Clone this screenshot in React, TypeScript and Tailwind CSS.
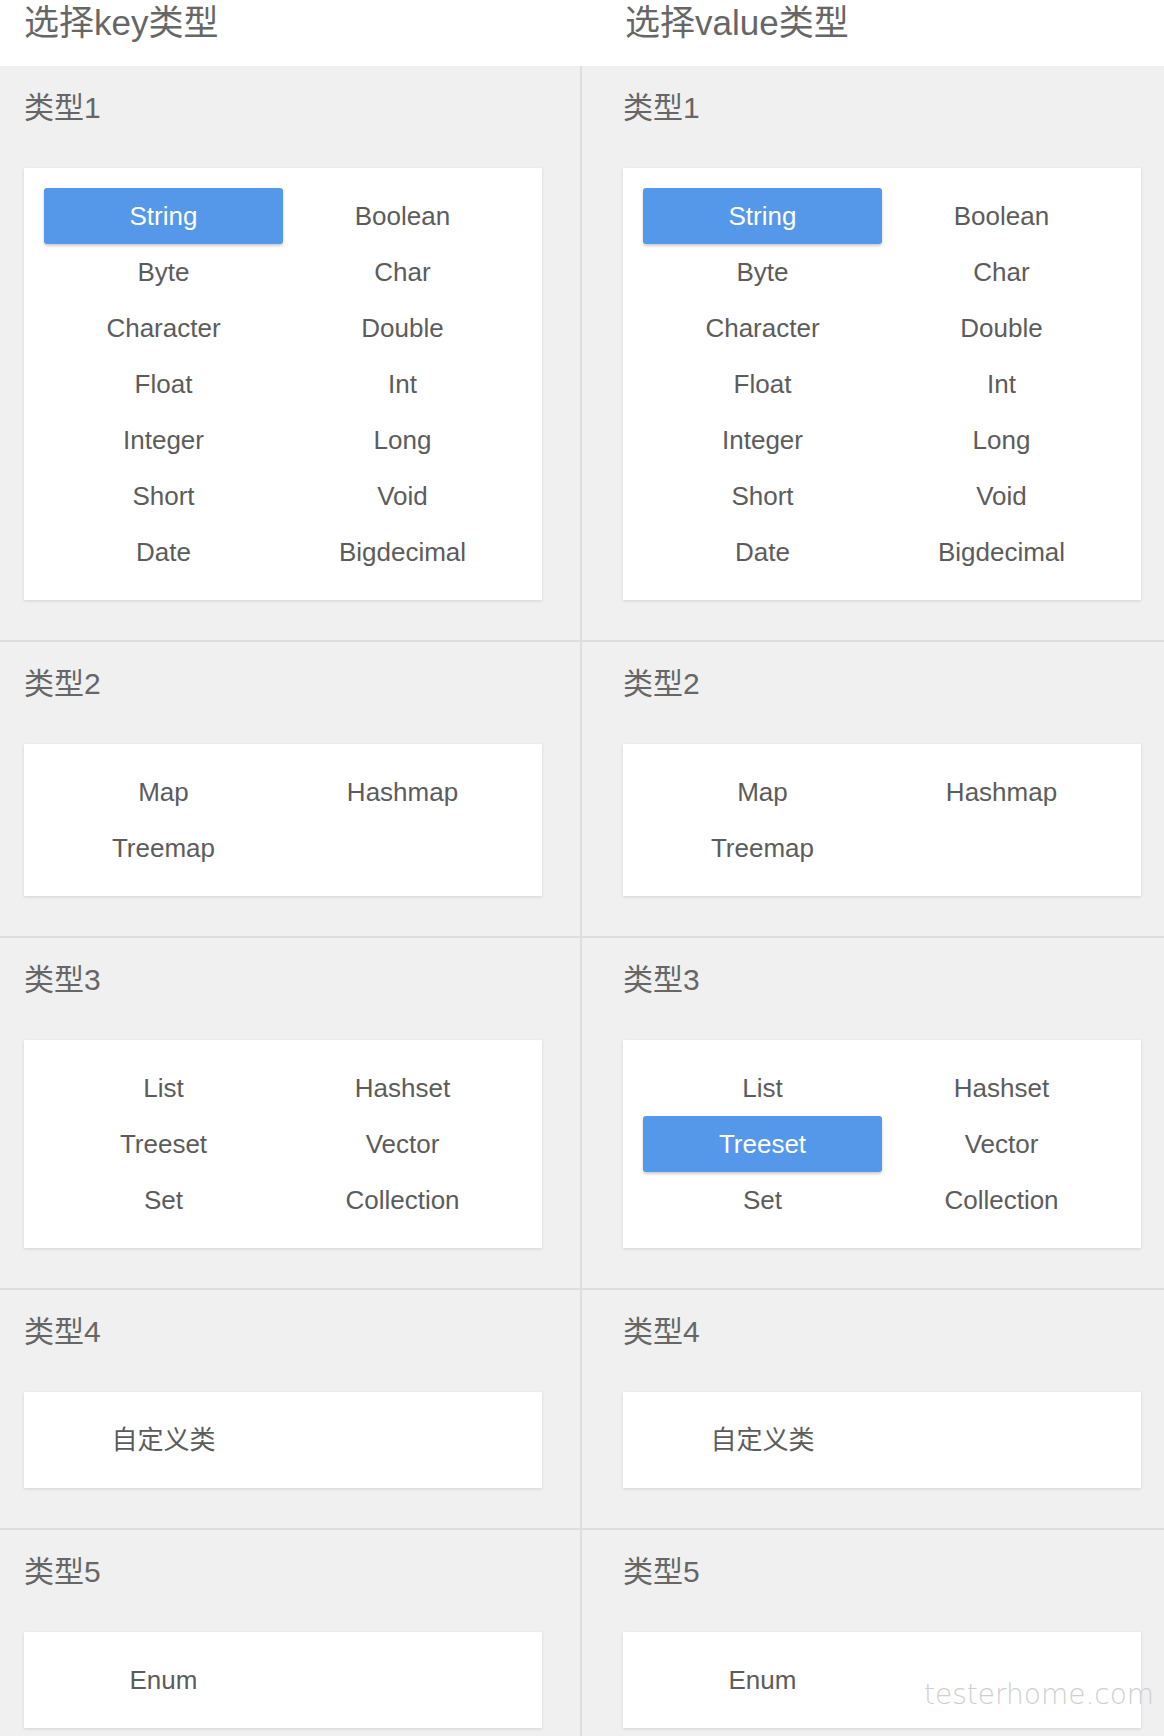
import React from "react";

type Group = { title: string; items: string[] };

const groups: Group[] = [
  {
    title: "类型1",
    items: ["String", "Boolean", "Byte", "Char", "Character", "Double", "Float", "Int", "Integer", "Long", "Short", "Void", "Date", "Bigdecimal"],
  },
  { title: "类型2", items: ["Map", "Hashmap", "Treemap"] },
  { title: "类型3", items: ["List", "Hashset", "Treeset", "Vector", "Set", "Collection"] },
  { title: "类型4", items: ["自定义类"] },
  { title: "类型5", items: ["Enum"] },
];

function Card({ items, selected }: { items: string[]; selected: string[] }) {
  return (
    <div className="w-[518px] bg-white p-5 shadow-[0_1px_3px_rgba(0,0,0,0.12)]">
      <div className="grid grid-cols-2">
        {items.map((it) => {
          const on = selected.includes(it);
          return (
            <div
              key={it}
              className={
                on
                  ? "h-[56px] flex items-center justify-center rounded-[3px] bg-[#5597e8] text-white text-[26px] shadow-[0_2px_3px_rgba(0,0,0,0.2)]"
                  : "h-[56px] flex items-center justify-center text-[#5c5c5c] text-[26px]"
              }
            >
              {it}
            </div>
          );
        })}
      </div>
    </div>
  );
}

function Column({ selected, left }: { selected: string[]; left: boolean }) {
  return (
    <div className={left ? "w-[582px] border-r-2 border-[#dedede]" : "flex-1"}>
      {groups.map((g, i) => (
        <div
          key={g.title}
          className={
            (left ? "pl-6 " : "pl-[41px] ") +
            "pb-10 " +
            (i < groups.length - 1 ? "border-b-2 border-[#dedede]" : "")
          }
        >
          <div className="h-[102px] pt-[23px] text-[30px] leading-[38px] text-[#666666]">{g.title}</div>
          <Card items={g.items} selected={selected} />
        </div>
      ))}
    </div>
  );
}

export default function App() {
  return (
    <div
      className="relative w-[1164px] h-[1736px] overflow-hidden bg-[#f0f0f0]"
      style={{ fontFamily: '"Liberation Sans", "Noto Sans CJK SC", sans-serif' }}
    >
      <div className="h-[66px] bg-white flex">
        <div className="w-[584px] pl-6 pt-[2px] text-[35px] leading-[42px] text-[#666666]">选择key类型</div>
        <div className="flex-1 pl-[41px] pt-[2px] text-[35px] leading-[42px] text-[#666666]">选择value类型</div>
      </div>
      <div className="flex">
        <Column selected={["String"]} left={true} />
        <Column selected={["String", "Treeset"]} left={false} />
      </div>
      <div
        className="absolute left-[924px] top-[1678px] text-[28px] leading-[34px] font-extralight text-[#cfcfcf]"
        style={{ fontFamily: '"DejaVu Sans", sans-serif' }}
      >
        testerhome.com
      </div>
    </div>
  );
}
